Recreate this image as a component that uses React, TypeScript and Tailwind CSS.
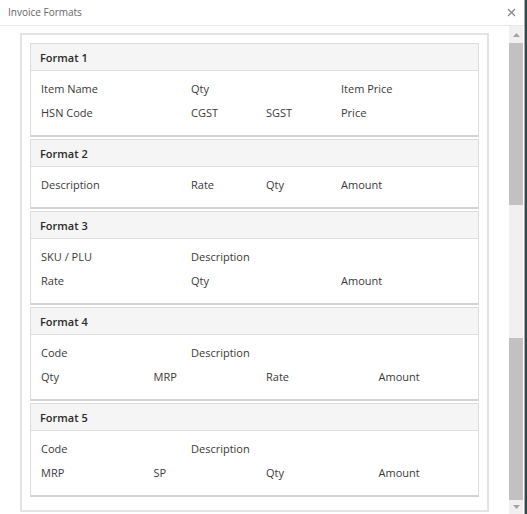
import React from 'react';

type Cell = { label: string; span: 2 | 3 | 4 };

interface InvoiceFormat {
  title: string;
  rows: Cell[][];
}

const formats: InvoiceFormat[] = [
  {
    title: 'Format 1',
    rows: [
      [{ label: 'Item Name', span: 4 }, { label: 'Qty', span: 4 }, { label: 'Item Price', span: 4 }],
      [{ label: 'HSN Code', span: 4 }, { label: 'CGST', span: 2 }, { label: 'SGST', span: 2 }, { label: 'Price', span: 4 }],
    ],
  },
  {
    title: 'Format 2',
    rows: [
      [{ label: 'Description', span: 4 }, { label: 'Rate', span: 2 }, { label: 'Qty', span: 2 }, { label: 'Amount', span: 4 }],
    ],
  },
  {
    title: 'Format 3',
    rows: [
      [{ label: 'SKU / PLU', span: 4 }, { label: 'Description', span: 4 }],
      [{ label: 'Rate', span: 4 }, { label: 'Qty', span: 4 }, { label: 'Amount', span: 4 }],
    ],
  },
  {
    title: 'Format 4',
    rows: [
      [{ label: 'Code', span: 4 }, { label: 'Description', span: 4 }],
      [{ label: 'Qty', span: 3 }, { label: 'MRP', span: 3 }, { label: 'Rate', span: 3 }, { label: 'Amount', span: 3 }],
    ],
  },
  {
    title: 'Format 5',
    rows: [
      [{ label: 'Code', span: 4 }, { label: 'Description', span: 4 }],
      [{ label: 'MRP', span: 3 }, { label: 'SP', span: 3 }, { label: 'Qty', span: 3 }, { label: 'Amount', span: 3 }],
    ],
  },
];

const spanClass = {
  2: 'col-span-2',
  3: 'col-span-3',
  4: 'col-span-4',
};

function FormatCard({ format }: { format: InvoiceFormat }) {
  return (
    <div className="border border-b-2 border-[#dcdcdc] border-b-[#d2d2d2] bg-white">
      <div className="h-[27px] bg-[#f5f5f5] border-b border-[#dcdcdc] px-[9px] text-[11px] font-semibold leading-[27px] text-[#2a2a2a]">
        {format.title}
      </div>
      <div className="pl-[10px] pt-[6px] pb-[10px]">
        {format.rows.map((row, i) => (
          <div key={i} className="grid grid-cols-[repeat(12,37.5px)] h-6 items-center">
            {row.map((cell) => (
              <div key={cell.label} className={`${spanClass[cell.span]} text-[11px] text-[#3a3a3a] whitespace-nowrap`}>
                {cell.label}
              </div>
            ))}
          </div>
        ))}
      </div>
    </div>
  );
}

function Scrollbar() {
  return (
    <div className="w-[14px] flex flex-col bg-[#f0f0f0]">
      {/* up arrow */}
      <div className="h-[17px] flex items-center justify-center">
        <svg width="7" height="4" viewBox="0 0 7 4">
          <polygon points="0,4 7,4 3.5,0" fill="#a3a3a3" />
        </svg>
      </div>
      <div className="h-[162px] bg-[#c1c1c1]" />
      <div className="h-[133px]" />
      <div className="h-[162px] bg-[#c1c1c1]" />
      <div className="flex-1 flex items-center justify-center">
        <svg width="7" height="4" viewBox="0 0 7 4">
          <polygon points="0,0 7,0 3.5,4" fill="#a3a3a3" />
        </svg>
      </div>
    </div>
  );
}

export default function App() {
  return (
    <div
      className="flex w-[527px] h-[514px] overflow-hidden bg-[#2f4a4a]"
      style={{ fontFamily: '"Open Sans", "Noto Sans", sans-serif' }}
    >
      <div className="w-[525px] h-full bg-white border-r border-[#a8a8a8] flex flex-col">
        {/* Header */}
        <div className="h-[26px] shrink-0 flex items-center justify-between border-b border-[#e6e6e6] pl-2 pr-[6px]">
          <span className="text-[10px] text-[#666]">Invoice Formats</span>
          <svg width="9" height="9" viewBox="0 0 9 9" className="mr-[2px]">
            <path d="M1 1 L8 8 M8 1 L1 8" stroke="#8a8a8a" strokeWidth="1.3" />
          </svg>
        </div>

        {/* Body */}
        <div className="flex flex-1 min-h-0">
          <div className="flex-1 pl-5 pr-5 pt-[7px] overflow-hidden">
            <div className="border-2 border-[#e4e4e4] px-2 pt-[8px] pb-[13px] flex flex-col gap-[2px]">
              {formats.map((f) => (
                <FormatCard key={f.title} format={f} />
              ))}
            </div>
          </div>
          <Scrollbar />
          <div className="w-px" />
        </div>
      </div>
    </div>
  );
}
